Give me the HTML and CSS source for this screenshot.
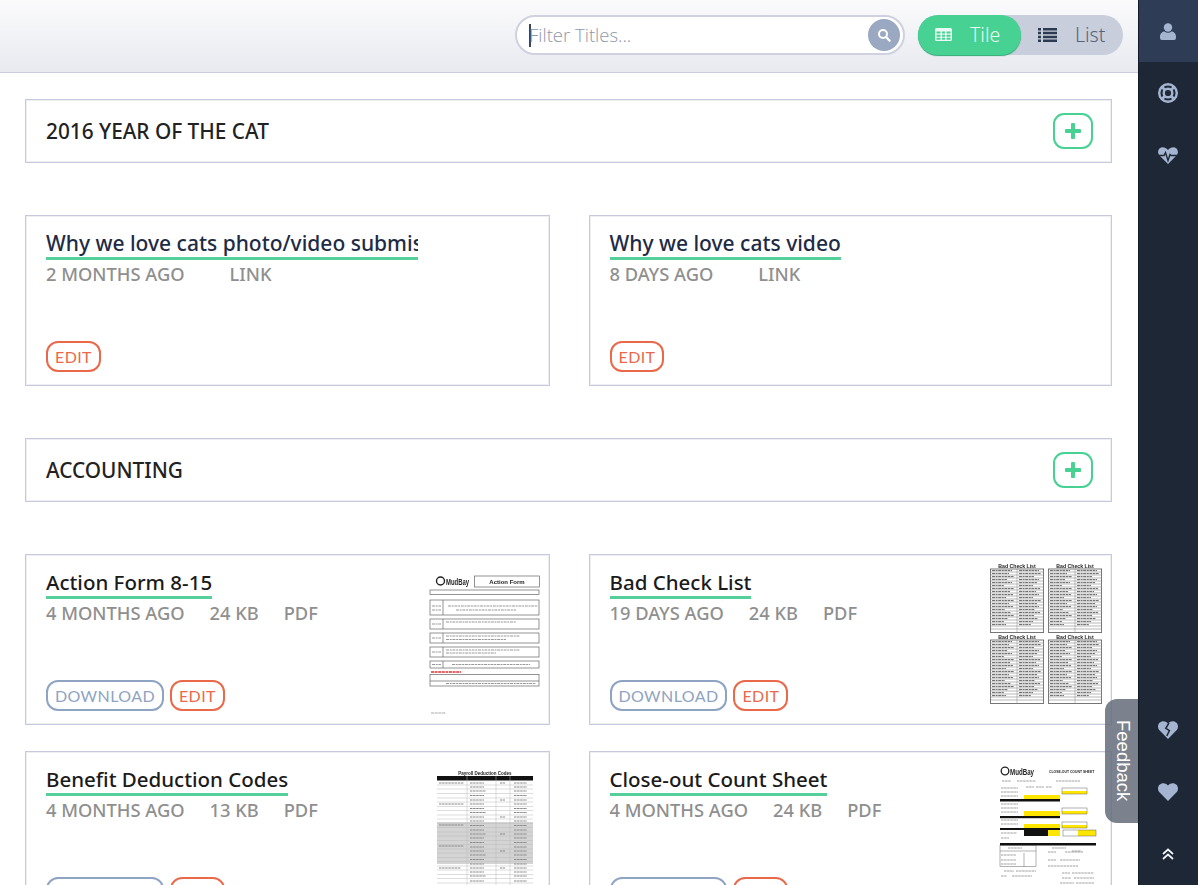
FILE: index.html
```html
<!DOCTYPE html>
<html lang="en">
<head>
  <meta charset="UTF-8" />
  <title>Documents</title>
  <link rel="stylesheet" href="styles.css">
</head>
<body>

  <svg class="defs" width="0" height="0" aria-hidden="true">
    <defs>
      <symbol id="check-list" viewBox="0 0 54 70">
        <text x="27" y="5" class="t-head" font-size="5.2">Bad Check List</text>
        <rect x=".4" y="6" width="53.2" height="63.5" fill="#fff" stroke="#555" stroke-width=".8"/>
        <path d="M0 9h54M0 12h54M0 15h54M0 18h54M0 21h54M0 24h54M0 27h54M0 30h54M0 33h54M0 36h54M0 39h54M0 42h54M0 45h54M0 48h54M0 51h54M0 54h54M0 57h54M0 60h54M0 63h54M0 66h54" stroke="#888" stroke-width=".6"/>
        <path d="M2 7.6h20M29 7.6h20M2 10.6h17M29 10.6h22M2 13.6h22M29 13.6h15M2 16.6h15M29 16.6h20M2 19.6h20M29 19.6h18M2 22.6h12M29 22.6h14M2 25.6h22M29 25.6h21M2 28.6h18M29 28.6h17M2 31.6h21M29 31.6h20M2 34.6h14M29 34.6h14M2 37.6h22M29 37.6h22M2 40.6h17M29 40.6h18M2 43.6h21M29 43.6h20M2 46.6h13M29 46.6h16M2 49.6h19M29 49.6h21M2 52.6h22M29 52.6h15M2 55.6h16M29 55.6h19M2 58.6h12M29 58.6h14M2 61.6h14M29 61.6h12" stroke="#666" stroke-width="1" stroke-dasharray="3 .6 2 .6"/>
        <path d="M27 6v63" stroke="#888" stroke-width=".5"/>
      </symbol>
    </defs>
  </svg>

  <div class="app">
    <div class="content">
      <header class="topbar">
        <div class="search">
          <span class="caret"></span>
          <span class="search-text">Filter Titles...</span>
          <button class="search-btn">
            <svg width="14" height="14" viewBox="0 0 14 14"><circle cx="6" cy="6" r="4" fill="none" stroke="#fff" stroke-width="2"/><path d="M9 9l3.6 3.6" stroke="#fff" stroke-width="2.2" stroke-linecap="round"/></svg>
          </button>
        </div>
        <div class="view-toggle">
          <a class="view-btn active">
            <svg width="17" height="13" viewBox="0 0 17 13"><path d="M1.500 0h14A1.500 1.500 0 0 1 17 1.500v10a1.500 1.500 0 0 1-1.500 1.500h-14A1.500 1.500 0 0 1 0 11.500v-10A1.500 1.500 0 0 1 1.500 0zM1.500 3.500v2h4v-2zm5.500 0v2h3v-2zm4.500 0v2h4v-2zm-10 3.200v2h4v-2zm5.500 0v2h3v-2zm4.500 0v2h4v-2zm-10 3.100v1.900h4v-1.900zm5.500 0v1.900h3v-1.900zm4.500 0v1.900h4v-1.900z" fill="#eafaf2" fill-rule="evenodd"/></svg>
            Tile
          </a>
          <a class="view-btn">
            <svg width="19" height="14" viewBox="0 0 19 14"><path d="M0 0h3v2.500H0zm5 0h14v2.500H5zM0 3.800h3v2.500H0zm5 0h14v2.500H5zM0 7.700h3v2.500H0zm5 0h14v2.500H5zM0 11.500h3V14H0zm5 0h14V14H5z" fill="#2c3a52"/></svg>
            List
          </a>
        </div>
      </header>

      <main>
        <section class="group">
          <div class="group-bar">
            <h2>2016 Year of the Cat</h2>
            <button class="add-btn"><svg width="16" height="16" viewBox="0 0 16 16"><path d="M8 1.500v13M1.500 8h13" stroke="#47d193" stroke-width="4" stroke-linecap="round"/></svg></button>
          </div>
          <div class="cards">
            <article class="card">
              <div class="card-body">
                <a class="title link-title clipped">Why we love cats photo/video submission</a>
                <div class="meta"><span>2 months ago</span><span class="no-size"></span><span>Link</span></div>
                <div class="actions"><a class="btn btn-edit">Edit</a></div>
              </div>
            </article>
            <article class="card">
              <div class="card-body">
                <a class="title link-title">Why we love cats video</a>
                <div class="meta"><span>8 days ago</span><span class="no-size"></span><span>Link</span></div>
                <div class="actions"><a class="btn btn-edit">Edit</a></div>
              </div>
            </article>
          </div>
        </section>

        <section class="group">
          <div class="group-bar">
            <h2>Accounting</h2>
            <button class="add-btn"><svg width="16" height="16" viewBox="0 0 16 16"><path d="M8 1.500v13M1.500 8h13" stroke="#47d193" stroke-width="4" stroke-linecap="round"/></svg></button>
          </div>
          <div class="cards">
            <article class="card">
              <div class="card-body">
                <a class="title">Action Form 8-15</a>
                <div class="meta"><span>4 months ago</span><span>24 KB</span><span>PDF</span></div>
                <div class="actions"><a class="btn btn-download">Download</a><a class="btn btn-edit">Edit</a></div>
              </div>
              <svg class="thumb" width="130" height="169" viewBox="419 555 130 169">
                <g fill="none" stroke="#666" stroke-width=".7">
                  <rect x="474.500" y="576" width="65" height="11"/>
                  <rect x="430" y="590" width="109" height="4.500"/>
                  <rect x="430" y="600" width="109" height="15"/>
                  <rect x="430" y="619" width="109" height="10"/>
                  <rect x="430" y="633" width="109" height="10"/>
                  <rect x="430" y="647" width="109" height="10"/>
                  <rect x="430" y="661" width="109" height="7"/>
                  <rect x="430" y="674.500" width="109" height="11.500"/>
                  <path d="M430 681h109M443 600v15M443 619v10M443 633v10M443 647v10M443 661v7"/>
                </g>
                <circle cx="440.500" cy="581" r="4" fill="none" stroke="#222" stroke-width="1.400"/>
                <text x="446" y="585" class="t-head t-left" font-size="9.500" textLength="23" lengthAdjust="spacingAndGlyphs">MudBay</text>
                <text x="507" y="584" class="t-head" font-size="6">Action Form</text>
                <path d="M448 606h90M456 610h60M446 622h70M446 636h74M446 639.500h60M446 650h74M446 653h50M452 664.500h78M446 683.500h90M432 606h9M432 610h9M432 624h9M432 638h9M432 652h9M432 664.500h9" stroke="#999" stroke-width="1.100" stroke-dasharray="3 .7 2 .7"/>
                <path d="M431 672h30" stroke="#d33" stroke-width="1.300" stroke-dasharray="3 .6"/>
                <path d="M431 713h15" stroke="#aaa" stroke-width="1.100" stroke-dasharray="3 .7"/>
              </svg>
            </article>
            <article class="card">
              <div class="card-body">
                <a class="title">Bad Check List</a>
                <div class="meta"><span>19 days ago</span><span>24 KB</span><span>PDF</span></div>
                <div class="actions"><a class="btn btn-download">Download</a><a class="btn btn-edit">Edit</a></div>
              </div>
              <svg class="thumb" width="130" height="169" viewBox="981 555 130 169">
                <use href="#check-list" x="990" y="563" width="54" height="70"/>
                <use href="#check-list" x="1048" y="563" width="54" height="70"/>
                <use href="#check-list" x="990" y="634" width="54" height="70"/>
                <use href="#check-list" x="1048" y="634" width="54" height="70"/>
              </svg>
            </article>
            <article class="card">
              <div class="card-body">
                <a class="title">Benefit Deduction Codes</a>
                <div class="meta"><span>4 months ago</span><span>13 KB</span><span>PDF</span></div>
                <div class="actions"><a class="btn btn-download">Download</a><a class="btn btn-edit">Edit</a></div>
              </div>
              <svg class="thumb" width="130" height="169" viewBox="419 752 130 169">
                <text x="485" y="775" class="t-head" font-size="4.500">Payroll Deduction Codes</text>
                <rect x="437" y="776" width="96" height="4.500" fill="#111"/>
                <rect x="437" y="822" width="96" height="42" fill="#d4d4d4"/>
                <path d="M437 785h96M437 789h96M437 793.500h96M437 798h96M437 802h96M437 806.500h96M437 810.500h96M437 815h96M437 819h96M437 823.500h96M437 827.500h96M437 832h96M437 836h96M437 840.500h96M437 844.500h96M437 849h96M437 853h96M437 857.500h96M437 861.500h96M437 866h96M437 870h96M437 874.500h96M437 878.500h96M437 883h96" stroke="#bbb" stroke-width=".5"/>
                <path d="M467 776v110M496 776v110M510 776v110" stroke="#bbb" stroke-width=".5"/>
                <path d="M470 783h14M470 787h14M470 791h16M470 795.500h14M470 800h14M470 804h14M470 808.500h14M470 812.500h16M470 817h14M470 821h14M470 825.500h14M470 830h14M470 834h16M470 838h14M470 842.500h14M470 847h14M470 851h14M470 855h16M470 859.500h14M470 864h14M470 868h14M470 872h14M470 876h16M470 881h14M514 783h13M514 787h13M514 791h13M514 795.500h13M514 800h13M514 804h13M514 808.500h13M514 812.500h13M514 817h13M514 821h13M514 825.500h13M514 830h13M514 834h13M514 838h13M514 842.500h13M514 847h13M514 851h13M514 855h13M514 859.500h13M514 864h13M514 868h13M514 872h13M514 876h13M514 881h13M500 783h5M500 800h5M500 817h5M500 834h5M500 851h5M500 868h5M439 783h25M439 804h25M439 825h25M439 846h25M439 868h22" stroke="#888" stroke-width="1" stroke-dasharray="2.500 .6"/>
              </svg>
            </article>
            <article class="card">
              <div class="card-body">
                <a class="title">Close-out Count Sheet</a>
                <div class="meta"><span>4 months ago</span><span>24 KB</span><span>PDF</span></div>
                <div class="actions"><a class="btn btn-download">Download</a><a class="btn btn-edit">Edit</a></div>
              </div>
              <svg class="thumb" width="130" height="169" viewBox="981 752 130 169">
                <circle cx="1005" cy="771" r="3.800" fill="none" stroke="#222" stroke-width="1.300"/>
                <text x="1010" y="775" class="t-head t-left" font-size="9" textLength="24" lengthAdjust="spacingAndGlyphs">MudBay</text>
                <text x="1049" y="773" class="t-head t-left" font-size="3.400">CLOSE-OUT COUNT SHEET</text>
                <g fill="#ffe600">
                  <rect x="1024" y="795" width="36" height="4"/><rect x="1024" y="811" width="36" height="5"/><rect x="1024" y="824" width="36" height="4"/>
                  <rect x="1062" y="791" width="25" height="3"/><rect x="1062" y="811" width="25" height="3"/><rect x="1062" y="825" width="25" height="3"/>
                  <rect x="1048" y="830" width="12" height="6"/><rect x="1078" y="830" width="18" height="6"/>
                </g>
                <g fill="#111">
                  <rect x="1000" y="799" width="60" height="2.500"/><rect x="1000" y="816" width="60" height="2.200"/><rect x="1000" y="828" width="60" height="2"/>
                  <rect x="1024" y="830" width="24" height="6"/><rect x="1000" y="843" width="96" height="2.500"/>
                </g>
                <g fill="none" stroke="#666" stroke-width=".5">
                  <rect x="1062" y="788" width="25" height="6"/><rect x="1062" y="808" width="25" height="6"/><rect x="1062" y="822" width="25" height="6"/><rect x="1063" y="830" width="33" height="6"/>
                  <rect x="1000" y="845.500" width="36" height="21"/><path d="M1024 853v14M1000 851h36"/>
                </g>
                <path d="M1002 781h9M1017 781h19M1056 781h24M1026 787h8M1036 787h8M1046 787h6M1001 788h17M1001 792h17M1001 796h17M1001 804h17M1001 808h17M1001 812h17M1001 820h17M1001 824h17M1001 833h16M1001 838h8M1008 848h14M1001 855h15M1001 860h15M1001 864h15M1052 848h14M1072 851h9M1048 852h8M1065 852h18M1048 860h8M1060 860h20M1048 866h30M1004 871h10M1016 871h20M1001 876h6M1012 876h20M1062 873h8M1072 873h22M1062 878h9M1074 878h20M1060 883h14M1076 883h18" stroke="#888" stroke-width=".8" stroke-dasharray="2.500 .6"/>
              </svg>
            </article>
          </div>
        </section>
      </main>
    </div>

    <nav class="sidebar">
      <a class="side-item active">
        <svg width="16" height="17" viewBox="0 0 16 17"><circle cx="8" cy="4.500" r="4.200" fill="#a5b4d0"/><path d="M0 13.500c0-3 2.500-5 4.500-5 1 .8 2.200 1.200 3.500 1.200s2.500-.4 3.500-1.200c2 0 4.500 2 4.500 5v1.500a2 2 0 0 1-2 2H2a2 2 0 0 1-2-2z" fill="#a5b4d0"/></svg>
      </a>
      <a class="side-item">
        <svg width="20" height="20" viewBox="0 0 20 20" fill="none" stroke="#a5b4d0"><circle cx="10" cy="10" r="8.800" stroke-width="2.400"/><circle cx="10" cy="10" r="4.300" stroke-width="2.400"/><path d="M4 4l3 3M16 4l-3 3M4 16l3-3M16 16l-3-3" stroke-width="2.800"/></svg>
      </a>
      <a class="side-item">
        <svg width="20" height="17" viewBox="0 0 20 17"><path d="M10 17L1.500 8.500C-.5 6.300-.3 3 1.800 1.300 4-.6 7.500 0 10 3c2.500-3 6-3.600 8.200-1.700 2.100 1.700 2.300 5 .3 7.200z" fill="#a5b4d0"/><path d="M0 8.500h6l1.500-3 2.500 8 2-6 1 1h7" fill="none" stroke="#1e2736" stroke-width="1.400"/></svg>
      </a>
      <div class="side-spacer"></div>
      <a class="side-item">
        <svg width="20" height="18" viewBox="0 0 20 18"><path d="M10 18L1.700 9.500C-.5 7.200-.5 3.700 1.500 1.800 3.700-.4 7.500-.4 10 2.600c2.500-3 6.300-3 8.500-.8 2 1.900 2 5.400-.2 7.700z" fill="#a5b4d0"/><path d="M11 1.800L7.800 7.300l3.600 2.200L8.800 15" fill="none" stroke="#1e2736" stroke-width="1.500"/></svg>
      </a>
      <a class="side-item">
        <svg width="20" height="18" viewBox="0 0 20 18"><path d="M10 18L1.700 9.500C-.5 7.200-.5 3.700 1.500 1.800 3.700-.4 7.500-.4 10 2.600c2.500-3 6.300-3 8.500-.8 2 1.900 2 5.400-.2 7.700z" fill="#a5b4d0"/></svg>
      </a>
      <a class="side-item">
        <svg width="12" height="12" viewBox="0 0 12 12" fill="none" stroke="#f0f3fa" stroke-width="1.700"><path d="M1 6l5-4.500L11 6M1 11l5-4.500L11 11"/></svg>
      </a>
    </nav>

    <a class="feedback">Feedback</a>
  </div>

</body>
</html>
```

FILE: styles.css
```css
html, body {
  margin: 0;
  padding: 0;
  height: 100%;
  overflow: hidden;
}

body {
  font-family: "Noto Sans", sans-serif;
  background: #fff;
  color: #222;
}

.defs {
  position: absolute;
}

.app {
  display: flex;
  height: 885px;
  position: relative;
  overflow: hidden;
}

.content {
  width: 1138px;
  flex-shrink: 0;
}

/* top bar */
.topbar {
  height: 73px;
  display: flex;
  justify-content: flex-end;
  align-items: flex-start;
  gap: 13px;
  padding: 15px 15px 0 0;
  box-sizing: border-box;
  background: linear-gradient(#fbfbfc, #e8eaf0);
  border-bottom: 1px solid #c8ccdb;
}

.search {
  width: 390px;
  height: 40px;
  box-sizing: border-box;
  display: flex;
  align-items: center;
  background: #fff;
  border: 2px solid #cfd2de;
  border-radius: 20px;
  padding: 0 3px 0 12px;
}

.caret {
  width: 2px;
  height: 23px;
  background: #3a4558;
}

.search-text {
  flex: 1;
  margin: -2px 0 0 -2px;
  font-family: "Open Sans", sans-serif;
  font-size: 18.500px;
  font-weight: 300;
  color: #8d98ac;
}

.search-btn {
  width: 32px;
  height: 32px;
  padding: 0;
  border: none;
  border-radius: 50%;
  background: #9aa8c2;
  display: flex;
  align-items: center;
  justify-content: center;
}

.view-toggle {
  width: 205px;
  height: 40px;
  display: flex;
  background: #c8cedb;
  border-radius: 20px;
}

.view-btn {
  display: flex;
  align-items: center;
  gap: 18px;
  padding: 0 0 1px 17px;
  font-size: 19.500px;
  font-weight: 300;
  color: #56637b;
  flex: 1;
}

.view-btn.active {
  flex: none;
  width: 103px;
  box-sizing: border-box;
  color: #eafaf2;
  background: #47d193;
  border-radius: 20px;
  box-shadow: 0 1px 1px #2fa872;
}

/* groups */
main {
  padding: 26px 26px 0 25px;
}

.group {
  margin-bottom: 52px;
}

.group-bar {
  height: 64px;
  box-sizing: border-box;
  display: flex;
  align-items: center;
  justify-content: space-between;
  padding: 0 18px 0 20px;
  border: 1px solid #c8c9dc;
  box-shadow: inset 0 0 0 1px #eeeef5;
  margin-bottom: 52px;
}

.group-bar h2 {
  margin: 0;
  font-size: 20.800px;
  font-weight: 500;
  text-transform: uppercase;
  color: #222;
}

.add-btn {
  width: 40px;
  height: 36px;
  padding: 0;
  background: #fff;
  border: 2px solid #47d193;
  border-radius: 11px;
  display: flex;
  align-items: center;
  justify-content: center;
}

.cards {
  display: grid;
  grid-template-columns: 524.500px 523.500px;
  column-gap: 39px;
  row-gap: 26px;
}

.card {
  height: 171px;
  box-sizing: border-box;
  display: flex;
  border: 1px solid #c8c9dc;
  box-shadow: inset 0 0 0 1px #eeeef5;
}

.card-body {
  flex: 1;
  min-width: 0;
  display: flex;
  flex-direction: column;
  align-items: flex-start;
  padding: 14px 0 13px 20px;
}

.thumb {
  flex-shrink: 0;
  filter: blur(0.35px);
}

.t-head {
  font-family: "Liberation Sans", sans-serif;
  font-weight: bold;
  text-anchor: middle;
  fill: #222;
}

.t-left {
  text-anchor: start;
}

.title {
  font-size: 20.500px;
  font-weight: 500;
  line-height: 27px;
  color: #1b1b1b;
  border-bottom: 3px solid #55d09a;
  white-space: nowrap;
}

.link-title {
  font-size: 21px;
  color: #1e2b45;
}

.clipped {
  max-width: 372px;
  overflow: hidden;
}

.meta {
  font-size: 18.300px;
  font-weight: 500;
  line-height: 27px;
  color: #8f8f8f;
  text-transform: uppercase;
  display: flex;
  gap: 25px;
}

.no-size {
  margin-right: -5px;
}

.actions {
  margin-top: auto;
  display: flex;
  gap: 6px;
}

.btn {
  height: 31px;
  box-sizing: border-box;
  display: flex;
  align-items: center;
  padding: 0 7px;
  font-family: "Lato", sans-serif;
  font-size: 16px;
  text-transform: uppercase;
  letter-spacing: 0.4px;
  background: #fff;
  border-radius: 12px;
}

.btn-edit {
  color: #e9694a;
  border: 2.500px solid #e9694a;
}

.btn-download {
  color: #8fa3c2;
  border: 2.500px solid #8fa3c2;
}

/* sidebar */
.sidebar {
  width: 60px;
  display: flex;
  flex-direction: column;
  background: #1e2736;
  border-left: 1px solid #141b26;
  box-sizing: border-box;
}

.side-item {
  height: 62px;
  flex-shrink: 0;
  padding-right: 2px;
  display: flex;
  align-items: center;
  justify-content: center;
}

.side-item.active {
  background: #2e3d55;
}

.side-spacer {
  flex: 1;
}

.feedback {
  position: absolute;
  top: 699px;
  left: 1105px;
  width: 33px;
  height: 124px;
  padding-left: 3px;
  box-sizing: border-box;
  display: flex;
  align-items: center;
  justify-content: center;
  writing-mode: vertical-rl;
  font-family: "Liberation Sans", sans-serif;
  font-size: 18.500px;
  color: #fff;
  background: rgba(100, 108, 122, 0.85);
  border-radius: 12px 0 0 12px;
}
```
